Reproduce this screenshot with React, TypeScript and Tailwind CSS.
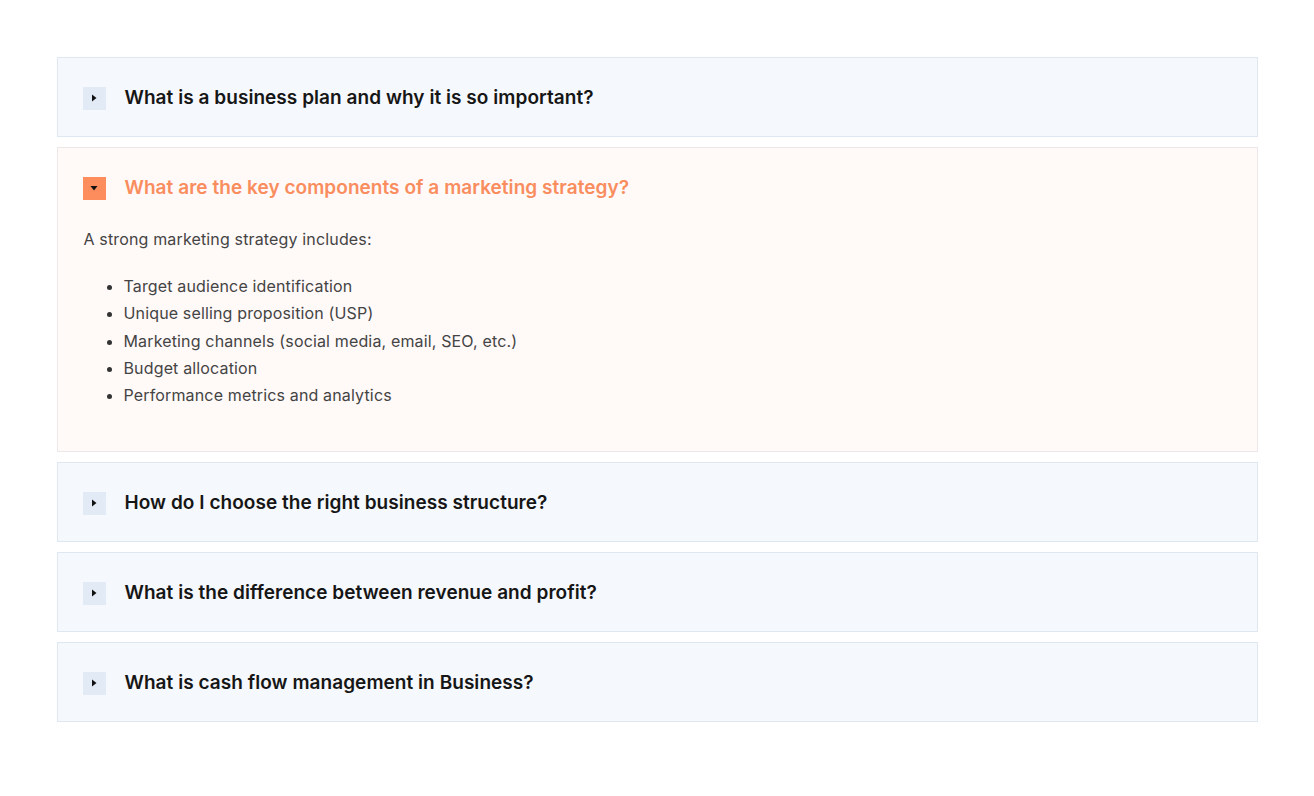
import { useState } from "react";

const FAQS = [
  { q: "What is a business plan and why it is so important?" },
  {
    q: "What are the key components of a marketing strategy?",
    intro: "A strong marketing strategy includes:",
    items: [
      "Target audience identification",
      "Unique selling proposition (USP)",
      "Marketing channels (social media, email, SEO, etc.)",
      "Budget allocation",
      "Performance metrics and analytics",
    ],
  },
  { q: "How do I choose the right business structure?" },
  { q: "What is the difference between revenue and profit?" },
  { q: "What is cash flow management in Business?" },
];

function Caret({ open }: { open: boolean }) {
  return (
    <span
      className={`flex h-[23px] w-[23px] shrink-0 items-center justify-center ${
        open ? "bg-[#fd8d5d]" : "bg-[#e2eaf5]"
      }`}
    >
      <svg width="10" height="10" viewBox="0 0 10 10" className={open ? "rotate-90" : ""}>
        <path d="M3 1.5 L7.5 5 L3 8.5 Z" fill="#111" />
      </svg>
    </span>
  );
}

export default function App() {
  const [open, setOpen] = useState(1);

  return (
    <div className="min-h-screen bg-white pt-[57px] font-['Inter','Noto_Sans',sans-serif]">
      <div className="mx-auto flex max-w-[1201px] flex-col gap-[10px]">
        {FAQS.map((f, i) => {
          const isOpen = open === i;
          return (
            <div
              key={i}
              className={`border ${
                isOpen ? "border-[#ece7e9] bg-[#fff9f8]" : "border-[#dfe7f1] bg-[#f5f8fc]"
              }`}
            >
              <button
                onClick={() => setOpen(isOpen ? -1 : i)}
                className="flex w-full items-center gap-[19px] px-[25px] pt-[28px] pb-[26px] text-left"
              >
                <Caret open={isOpen} />
                <span
                  className={`text-[19px] leading-[24px] font-semibold tracking-[0.05px] ${
                    isOpen ? "text-[#f98d5e]" : "text-[#161616]"
                  }`}
                >
                  {f.q}
                </span>
              </button>
              {isOpen && f.items && (
                <div className="px-[26px] pb-[42px] text-[16px] tracking-[0.15px] text-[#444]">
                  <p className="leading-[27px]">{f.intro}</p>
                  <ul className="mt-[20px] list-disc pl-[40px] leading-[27.3px] marker:text-[#333]">
                    {f.items.map((it) => (
                      <li key={it}>{it}</li>
                    ))}
                  </ul>
                </div>
              )}
            </div>
          );
        })}
      </div>
    </div>
  );
}
